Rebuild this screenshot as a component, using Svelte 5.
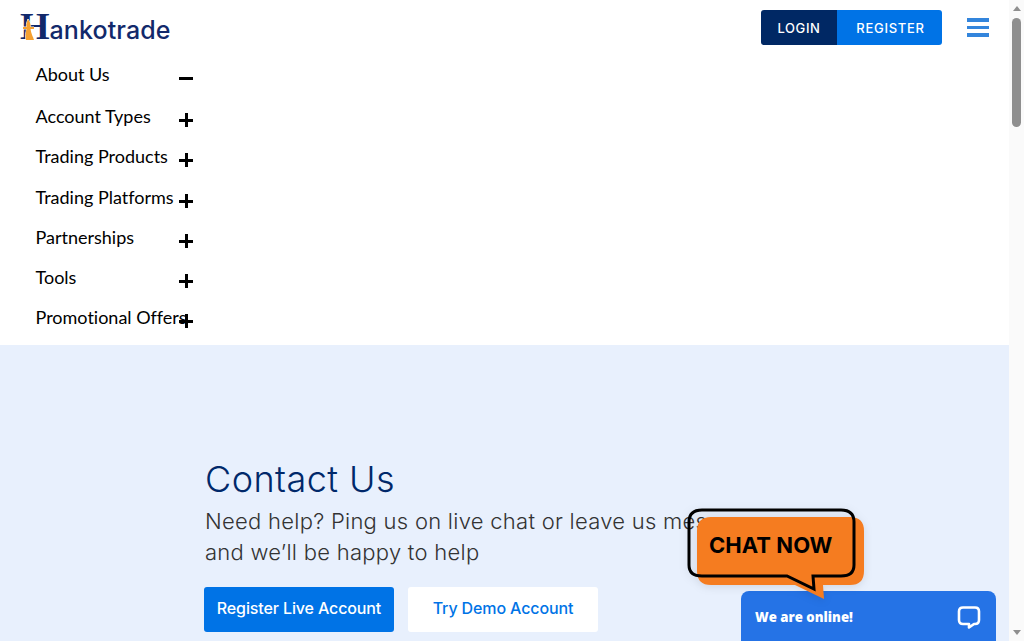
<script>
  const items = [
    { label: "About Us", open: true },
    { label: "Account Types" },
    { label: "Trading Products" },
    { label: "Trading Platforms" },
    { label: "Partnerships" },
    { label: "Tools" },
    { label: "Promotional Offers" },
  ];
</script>

<div class="window">
  <div class="page">
    <header>
      <div class="logo">
        <span class="logo-h">H</span><span class="logo-rest">ankotrade</span>
        <svg class="flame" width="14" height="22" viewBox="0 0 14 22">
          <path d="M6 0 C8 3 9 6 8.500 8 L12 8 L12 10 L8.500 10 C9 14 11 18 12 21 L4 21 C3 17 4 13 4.500 10 L1 10 L1 8 L4.500 8 C4 5 5 3 6 0 Z" fill="#f5a030" stroke="#fff" stroke-width="1" paint-order="stroke" />
        </svg>
      </div>
      <div class="actions">
        <div class="auth">
          <button class="login">LOGIN</button>
          <button class="register">REGISTER</button>
        </div>
        <button class="burger" aria-label="Menu"><span></span><span></span><span></span></button>
      </div>
    </header>

    <nav>
      {#each items as item}
        <div class="row">
          <span class="lbl">{item.label}</span>
          <span class="toggle" class:open={item.open}></span>
        </div>
      {/each}
    </nav>

    <section class="contact">
      <h2>Contact Us</h2>
      <p>Need help? Ping us on live chat or leave us message<br />and we’ll be happy to help</p>
      <div class="cta">
        <button class="primary">Register Live Account</button>
        <button class="secondary">Try Demo Account</button>
      </div>
    </section>

    <div class="chat">
      <span>We are online!</span>
      <svg width="24" height="24" viewBox="0 0 24 24" fill="none">
        <path d="M6 2.500 H18 Q22 2.500 22 6.500 V15 Q22 19 18 19 H17 L12 22.500 V19 H6 Q2 19 2 15 V6.500 Q2 2.500 6 2.500 Z" stroke="#fff" stroke-width="2.600" stroke-linejoin="round" />
      </svg>
    </div>

    <div class="bubble">
      <svg width="190" height="104" viewBox="0 0 190 104">
        <path d="M26 12 H165 Q179 12 179 26 V66 Q179 80 165 80 H138 L139 94 L110 80 H26 Q12 80 12 66 V26 Q12 12 26 12 Z" fill="#f57c20" />
        <path d="M17 5 H156 Q169 5 169 17 V60 Q169 71 156 71 H128 L129 84 L102 71 H17 Q4 71 4 60 V17 Q4 5 17 5 Z" fill="none" stroke="#000" stroke-width="3" />
      </svg>
      <span>CHAT NOW</span>
    </div>
  </div>

  <div class="scrollbar">
    <i class="up"></i>
    <div class="track"><div class="thumb"></div></div>
    <i class="down"></i>
  </div>
</div>

<style>
  :global(body) {
    margin: 0;
    background: #fff;
  }
  .window {
    display: flex;
    height: 641px;
    overflow: hidden;
  }
  .page {
    position: relative;
    flex: 1;
    min-width: 0;
    overflow: hidden;
  }
  header {
    display: flex;
    justify-content: space-between;
    align-items: flex-start;
    height: 54px;
    padding: 10px 20px 0;
    box-sizing: border-box;
  }
  .logo {
    position: relative;
    display: flex;
    align-items: baseline;
    height: 32px;
    color: #12296b;
  }
  .logo-h {
    font: 700 38px/32px "Liberation Serif", serif;
  }
  .logo-rest {
    font: 500 25px/32px Inter, sans-serif;
    letter-spacing: 0.1px;
  }
  .flame {
    position: absolute;
    left: 2px;
    top: 9px;
  }
  .actions {
    display: flex;
    align-items: center;
    gap: 25px;
  }
  .auth {
    display: flex;
    border-radius: 3px;
    overflow: hidden;
  }
  button {
    border: 0;
    padding: 0;
    cursor: pointer;
  }
  .auth button {
    height: 35px;
    color: #fff;
    font: 500 13px Inter, sans-serif;
    letter-spacing: 0.6px;
  }
  .login {
    width: 76px;
    background: #002864;
  }
  .auth .register {
    width: 105px;
    padding-left: 2px;
    background: #0073e6;
    letter-spacing: 0.7px;
  }
  .burger {
    display: flex;
    flex-direction: column;
    gap: 4px;
    width: 22px;
    background: none;
  }
  .burger span {
    height: 3.500px;
    background: #3385dc;
  }
  nav {
    height: 291px;
    padding: 0 0 0 36px;
  }
  .row {
    display: flex;
    align-items: flex-start;
    height: 40.300px;
    font: 400 18px/40px Lato, sans-serif;
    font-variant-ligatures: none;
    color: #000;
  }
  .row:first-child {
    height: 42px;
  }
  .lbl {
    width: 143px;
    white-space: nowrap;
    margin-left: -0.5px;
  }
  .toggle {
    position: relative;
    width: 14px;
    height: 14px;
    margin: 17px 0 0 0.5px;
  }
  .toggle::before,
  .toggle::after {
    content: "";
    position: absolute;
    background: #000;
  }
  .toggle::before {
    left: 0;
    right: 0;
    top: 6px;
    height: 3px;
  }
  .toggle::after {
    top: 0;
    bottom: 0;
    left: 5.500px;
    width: 3px;
  }
  .toggle.open::after {
    display: none;
  }
  .contact {
    height: 296px;
    box-sizing: border-box;
    padding: 113px 0 0 205px;
    background: #e8f0fd;
  }
  h2 {
    margin: 0;
    font: 300 36px/42px Inter, sans-serif;
    letter-spacing: 0.45px;
    color: #00286a;
  }
  p {
    margin: 6px 0 0;
    font: 300 22px/31px Inter, sans-serif;
    letter-spacing: 0.27px;
    color: #333;
    white-space: nowrap;
  }
  .cta {
    display: flex;
    gap: 14px;
    margin: 19px 0 0 -1px;
  }
  .cta button {
    width: 190px;
    height: 45px;
    padding-bottom: 3px;
    border-radius: 3px;
    font: 500 16px Inter, sans-serif;
    letter-spacing: -0.12px;
  }
  .primary {
    background: #0073e6;
    color: #fff;
  }
  .secondary {
    background: #fff;
    color: #0073e6;
  }
  .bubble {
    position: absolute;
    left: 685px;
    top: 505px;
    width: 190px;
    height: 104px;
  }
  .bubble svg {
    display: block;
    filter: drop-shadow(0 2px 4px rgba(0, 0, 0, 0.1));
  }
  .bubble span {
    position: absolute;
    left: 24px;
    top: 26px;
    font: 700 22px/28px Inter, sans-serif;
    letter-spacing: 0.05px;
    color: #000;
  }
  .chat {
    position: absolute;
    left: 741px;
    top: 591px;
    width: 255px;
    height: 50px;
    box-sizing: border-box;
    padding: 1px 15px 0 14px;
    display: flex;
    justify-content: space-between;
    align-items: center;
    background: #2573e6;
    border-radius: 8px 8px 0 0;
    color: #fff;
    font: 800 13.200px "Open Sans", sans-serif;
  }
  .scrollbar {
    width: 15px;
    flex: none;
    display: flex;
    flex-direction: column;
    align-items: center;
    background: #fafafa;
  }
  .up,
  .down {
    width: 0;
    height: 0;
    margin: 6px 0;
    border-left: 4.500px solid transparent;
    border-right: 4.500px solid transparent;
  }
  .up {
    border-bottom: 5px solid #8f8f8f;
  }
  .down {
    border-top: 5px solid #8f8f8f;
  }
  .track {
    flex: 1;
    width: 100%;
    display: flex;
    justify-content: center;
    padding-top: 1px;
  }
  .thumb {
    width: 9px;
    height: 109px;
    border-radius: 5px;
    background: #8f8f8f;
  }
</style>
